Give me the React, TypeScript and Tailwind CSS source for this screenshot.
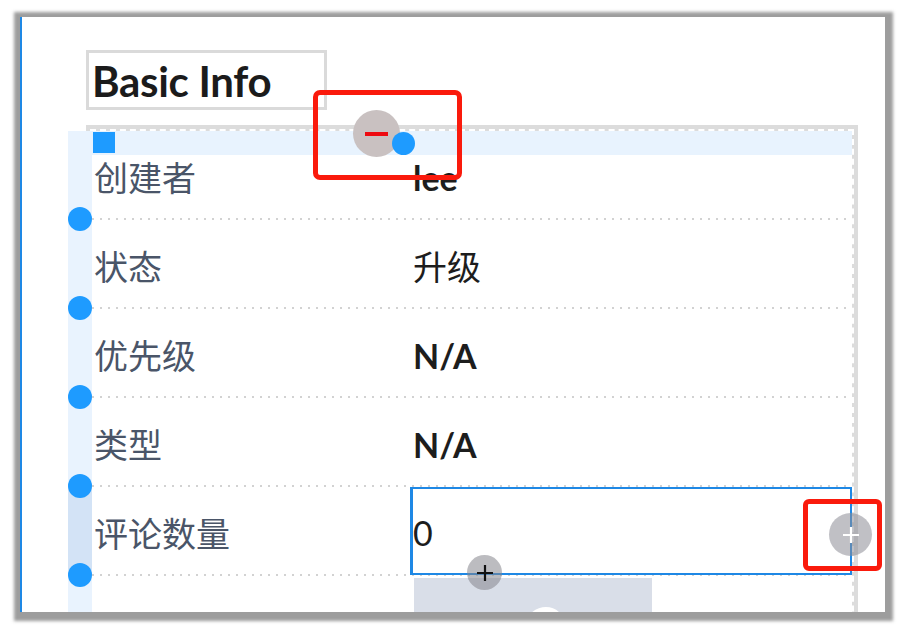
import React from "react";

const rows = [
  { label: "创建者", value: "lee", bold: true },
  { label: "状态", value: "升级", bold: false },
  { label: "优先级", value: "N/A", bold: true },
  { label: "类型", value: "N/A", bold: true },
  { label: "评论数量", value: "0", bold: false, selected: true },
];

const Sep = () => (
  <div className="h-[2px] w-full bg-[linear-gradient(to_right,#d2d2d2_0_2px,transparent_2px)] bg-size-[8px_2px] bg-repeat-x" />
);

const App: React.FC = () => {
  return (
    <div className="w-[905px] h-[629px] bg-white pt-[17px] pl-[20px] font-['Lato','Noto_Sans_CJK_SC',sans-serif]">
      {/* captured window */}
      <div className="relative w-[865px] h-[595px] bg-white overflow-hidden border-l-2 border-[#1e88e5] shadow-[1px_2px_3px_7px_rgba(140,140,140,0.85)]">
        <div className="pt-[33px] pl-[64px]">
          <div className="w-[241px] h-[60px] border-[3px] border-[#dadada] flex items-center pl-[3px] pt-[2px]">
            <span className="text-[42px] font-bold text-[#1b1b1b] leading-none tracking-[-0.3px]">Basic Info</span>
          </div>
        </div>

        <div className="flex mt-[15px] ml-[46px]">
          {/* drag handle column */}
          <div className="relative z-10 mt-[6px] w-[24px] h-[600px] bg-[#e9f3fe] flex flex-col items-center pt-[76px] gap-[65px]">
            <div className="absolute left-0 top-[356px] w-full h-[88px] bg-[#d3e3f6]" />
            {[0, 1, 2, 3, 4].map((i) => (
              <div key={i} className="relative w-[24px] h-[24px] rounded-full bg-[#1e9bff] shrink-0" />
            ))}
          </div>

          {/* table */}
          <div className="-ml-[6px] w-[772px] border-[4px] border-b-0 border-[#dcdcdc]">
            <div className="border-2 border-b-0 border-dashed border-white bg-[#dcdcdc]">
              <div className="relative bg-white h-[560px]">
                <div className="absolute left-0 top-0 w-full h-[24px] bg-[#e8f3fe]">
                  <div className="ml-[1px] mt-[1px] w-[22px] h-[21px] bg-[#1e9bff]" />
                </div>
                {rows.map((r) => (
                  <div key={r.label}>
                    <div className="flex h-[87px]">
                      <div className="w-[318px] flex items-center pl-[2px] pt-[5px] text-[34px] text-[#4a5568]">
                        {r.label}
                      </div>
                      {r.selected ? (
                        <div className="flex-1 flex items-center border-2 border-l-[3px] border-[#1e88e5] -mb-[1px] pt-[2px] text-[34px] text-[#1d1d1d]">
                          {r.value}
                        </div>
                      ) : (
                        <div
                          className={
                            r.bold
                              ? "flex-1 flex items-center pl-[3px] pt-[5px] text-[34px] font-bold text-[#1d1d1d]"
                              : "flex-1 flex items-center pl-[3px] pt-[5px] text-[34px] text-[#1d1d1d]"
                          }
                        >
                          {r.value}
                        </div>
                      )}
                    </div>
                    <Sep />
                  </div>
                ))}
                <div className="flex">
                  <div className="w-[322px]" />
                  <div className="mt-[2px] w-[238px] h-[80px] bg-[#d9dee8] flex justify-center">
                    <svg width="110" height="60" viewBox="0 0 110 60" className="mt-[14px]">
                      <path d="M14 60 C16 34 34 26 46 32 C54 10 80 10 86 28 C98 28 106 42 102 60 Z" fill="#ffffff" />
                    </svg>
                  </div>
                </div>
              </div>
            </div>
          </div>
        </div>

        {/* overlays */}
        <div className="absolute left-[331px] top-[93px] w-[47px] h-[47px] rounded-full bg-[#c9c1c1] flex items-center justify-center">
          <div className="w-[23px] h-[4px] bg-[#ee0a10]" />
        </div>
        <div className="absolute left-[370px] top-[115px] w-[23px] h-[23px] rounded-full bg-[#1e9bff]" />
        <div className="absolute left-[291px] top-[73px] w-[149px] h-[90px] border-[5px] border-[#fa1a0c] rounded-[7px]" />

        <div className="absolute left-[807px] top-[496px] w-[43px] h-[43px] rounded-full bg-[#8d8d96]/55 flex items-center justify-center">
          <svg width="18" height="18" viewBox="0 0 18 18">
            <path d="M9 1v16M1 9h16" stroke="#ffffff" strokeWidth="2.2" />
          </svg>
        </div>
        <div className="absolute left-[781px] top-[482px] w-[79px] h-[72px] border-[5px] border-[#fa1a0c] rounded-[6px]" />

        <div className="absolute left-[445px] top-[538px] w-[35px] h-[35px] rounded-full bg-[#85858d]/55 flex items-center justify-center">
          <svg width="18" height="18" viewBox="0 0 18 18">
            <path d="M9 1v16M1 9h16" stroke="#111111" strokeWidth="2.2" />
          </svg>
        </div>
      </div>
    </div>
  );
};

export default App;
